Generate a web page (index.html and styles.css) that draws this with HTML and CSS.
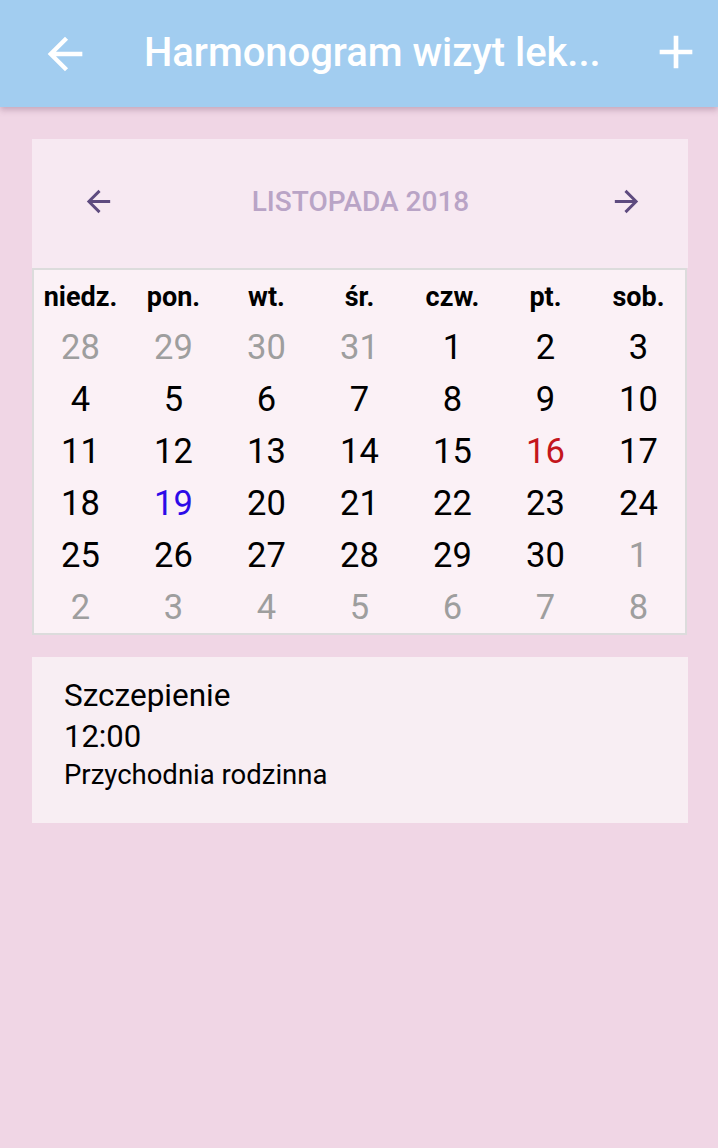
FILE: index.html
```html
<!DOCTYPE html>
<html lang="pl">
<head>
<meta charset="utf-8">
<title>Harmonogram wizyt lekarskich</title>
<link rel="stylesheet" href="styles.css">
</head>
<body>
<header class="appbar">
  <svg class="appbar-back" viewBox="0 0 24 24"><path d="M20 11H7.83l5.59-5.59L12 4l-8 8 8 8 1.41-1.41L7.83 13H20v-2z"/></svg>
  <h1 class="appbar-title">Harmonogram wizyt lek...</h1>
  <svg class="appbar-add" viewBox="0 0 24 24"><path d="M19 13h-6v6h-2v-6H5v-2h6V5h2v6h6v2z"/></svg>
</header>
<main class="content">
  <section class="calendar">
    <div class="cal-head">
      <svg class="cal-nav" viewBox="0 0 24 24"><path d="M20 11H7.83l5.59-5.59L12 4l-8 8 8 8 1.41-1.41L7.83 13H20v-2z"/></svg>
      <div class="cal-month">LISTOPADA 2018</div>
      <svg class="cal-nav" viewBox="0 0 24 24"><path d="M12 4l-1.41 1.41L16.17 11H4v2h12.17l-5.58 5.59L12 20l8-8z"/></svg>
    </div>
    <div class="cal-grid">
      <div class="dow">niedz.</div><div class="dow">pon.</div><div class="dow">wt.</div><div class="dow">śr.</div><div class="dow">czw.</div><div class="dow">pt.</div><div class="dow">sob.</div>
      <div class="day other">28</div><div class="day other">29</div><div class="day other">30</div><div class="day other">31</div><div class="day">1</div><div class="day">2</div><div class="day">3</div>
      <div class="day">4</div><div class="day">5</div><div class="day">6</div><div class="day">7</div><div class="day">8</div><div class="day">9</div><div class="day">10</div>
      <div class="day">11</div><div class="day">12</div><div class="day">13</div><div class="day">14</div><div class="day">15</div><div class="day event">16</div><div class="day">17</div>
      <div class="day">18</div><div class="day today">19</div><div class="day">20</div><div class="day">21</div><div class="day">22</div><div class="day">23</div><div class="day">24</div>
      <div class="day">25</div><div class="day">26</div><div class="day">27</div><div class="day">28</div><div class="day">29</div><div class="day">30</div><div class="day other">1</div>
      <div class="day other">2</div><div class="day other">3</div><div class="day other">4</div><div class="day other">5</div><div class="day other">6</div><div class="day other">7</div><div class="day other">8</div>
    </div>
  </section>
  <section class="visit">
    <div class="visit-name">Szczepienie</div>
    <div class="visit-time">12:00</div>
    <div class="visit-place">Przychodnia rodzinna</div>
  </section>
</main>
</body>
</html>
```
FILE: styles.css
```css
* { box-sizing: border-box; }
html, body { margin: 0; padding: 0; }
body {
  background: #F0D6E5;
  font-family: Roboto, "Noto Sans", sans-serif;
  width: 718px;
  min-height: 1148px;
}
.appbar {
  height: 107px;
  background: #A2CDF0;
  display: flex;
  align-items: center;
  padding: 0 14px 0 39px;
  box-shadow: 0 3px 6px rgba(120, 80, 110, 0.35);
  position: relative;
}
.appbar-back { width: 52px; height: 52px; fill: #fff; flex: none; }
.appbar-title {
  margin: -2px 0 0 53px;
  flex: 1;
  color: #fff;
  font-size: 40px;
  font-weight: 500;
  letter-spacing: -0.05px;
  white-space: nowrap;
}
.appbar-add { width: 56px; height: 56px; fill: #fff; flex: none; margin-top: -4px; }
.content { padding: 32px 30px 0 32px; }
.calendar { width: 656px; }
.cal-head {
  height: 129px;
  background: #F7E9F2;
  display: grid;
  grid-template-columns: 1fr auto 1fr;
  align-items: center;
  padding: 0 44px 4px 49px;
}
.cal-nav { width: 35px; height: 35px; fill: #5E4B7F; }
.cal-nav:last-child { justify-self: end; }
.cal-month {
  color: #B9A4C6;
  font-size: 28px;
  font-weight: 500;
  letter-spacing: 0;
  margin-right: 4px;
}
.cal-grid {
  background: #FBF1F6;
  border: 2px solid #DCDCDC;
  display: grid;
  grid-template-columns: repeat(7, 1fr);
  grid-template-rows: 51px repeat(6, 52px);
  margin-right: 1px;
}
.dow, .day {
  display: flex;
  align-items: center;
  justify-content: center;
}
.dow { font-size: 27px; font-weight: 700; color: #000; padding-top: 3px; }
.day { font-size: 34.5px; color: #000; }
.day.other { color: #9E9E9E; }
.day.event { color: #C4161C; }
.day.today { color: #2D0BE8; }
.visit {
  margin-top: 22px;
  width: 656px;
  height: 166px;
  background: #F8EEF3;
  padding: 19px 32px 0;
  color: #000;
}
.visit-name { font-size: 31.5px; line-height: 40px; }
.visit-time { font-size: 31px; line-height: 42px; margin-top: 0; }
.visit-place { font-size: 27.5px; line-height: 34px; }
```
